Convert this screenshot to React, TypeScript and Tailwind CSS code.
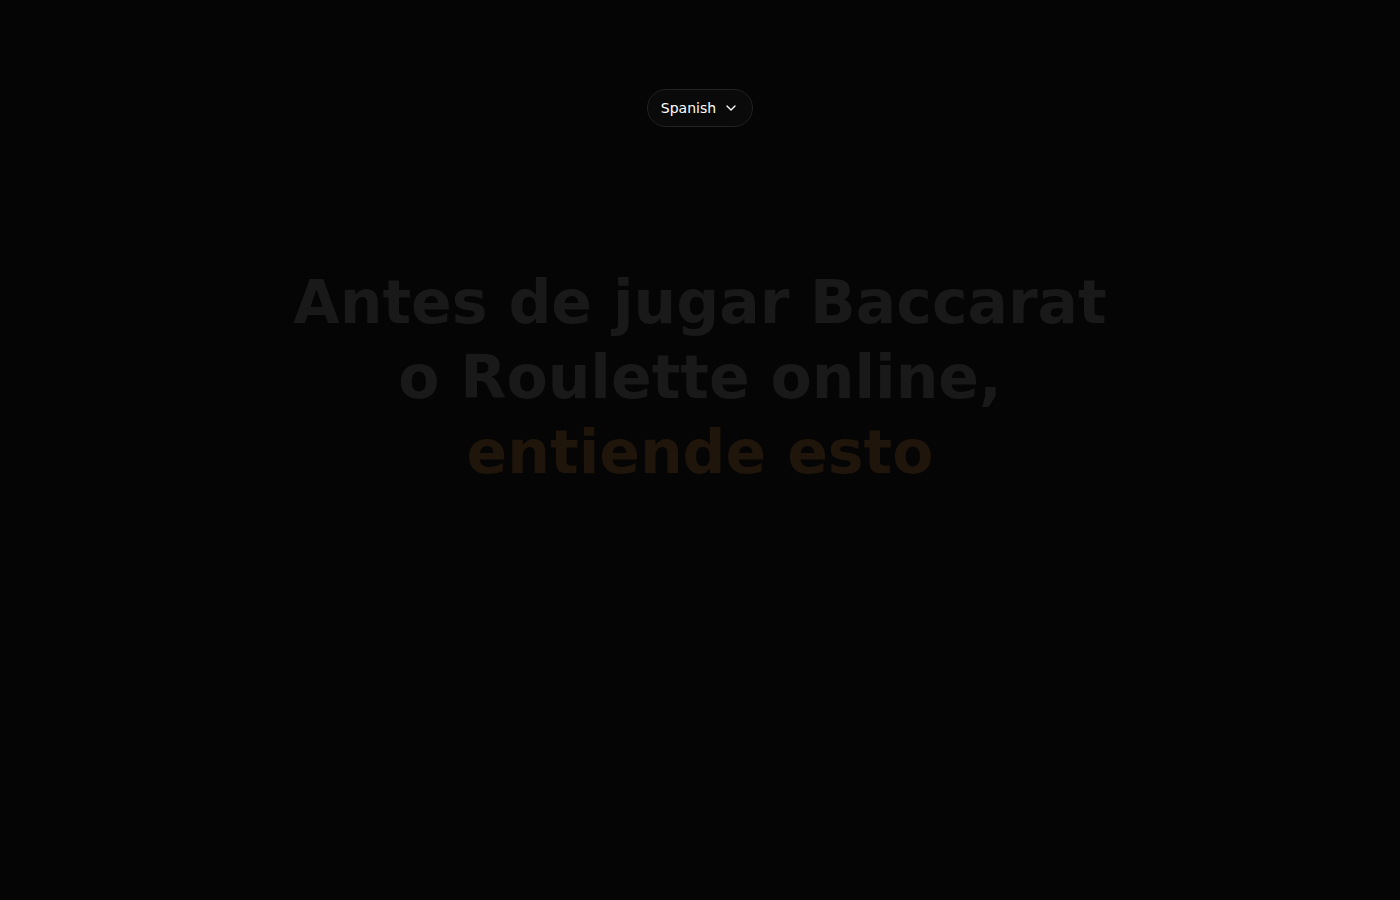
import { ChevronDown } from 'lucide-react';

export default function App() {
  return (
    <div
      className="min-h-screen w-full bg-[#050505] flex flex-col items-center"
      style={{ fontFamily: '"DejaVu Sans", sans-serif' }}
    >
      <button className="mt-[89px] h-[38px] flex items-center gap-[7px] pl-[13px] pr-[13px] rounded-full border border-[#222222] bg-[#0a0a0a] text-white text-[14px]">
        Spanish
        <ChevronDown size={16} strokeWidth={2} />
      </button>

      <h1 className="mt-[138px] text-center font-bold text-[60px] leading-[75px] text-[#191919]">
        Antes de jugar Baccarat
        <br />
        o Roulette online,
        <br />
        <span className="text-[#1f150a]">entiende esto</span>
      </h1>
    </div>
  );
}
